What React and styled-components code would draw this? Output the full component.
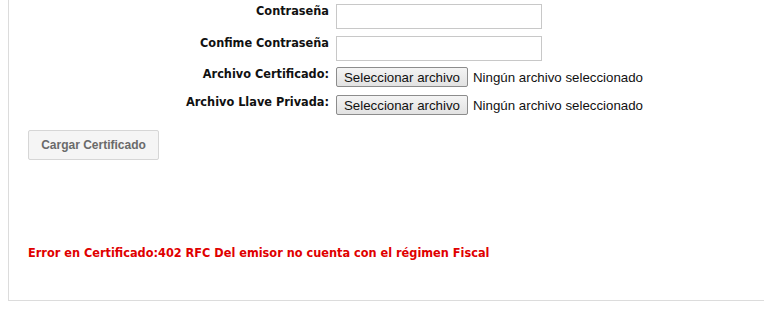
import React from 'react';
import styled, { createGlobalStyle } from 'styled-components';

const GlobalStyle = createGlobalStyle`
    html, body {
        margin: 0;
        padding: 0;
        background: #fff;
    }
`;

const Page = styled.div`
    padding-left: 8px;
    width: 756px;
`;

const Panel = styled.div`
    border-left: 1px solid #dcdcdc;
    border-bottom: 1px solid #dcdcdc;
    height: 301px;
    box-sizing: border-box;
`;

const Form = styled.div`
    display: grid;
    grid-template-columns: 320px 1fr;
    column-gap: 7px;
    padding-top: 4px;
`;

const Label = styled.div`
    text-align: right;
    font-family: "DejaVu Sans Condensed", "DejaVu Sans", Tahoma, sans-serif;
    font-weight: bold;
    font-size: 12.6px;
    line-height: 13px;
    color: #111;
    margin-bottom: ${p => p.$gap || 0}px;
`;

const Field = styled.div`
    display: flex;
    align-items: center;
    margin-bottom: ${p => p.$gap || 0}px;
`;

const TextInput = styled.input`
    width: 206px;
    height: 25px;
    box-sizing: border-box;
    border: 1px solid #c8c8c8;
    padding: 2px 4px;
    font-size: 13px;
    outline: none;
`;

const FileButton = styled.button`
    height: 20px;
    width: 132px;
    box-sizing: border-box;
    padding: 0;
    border: 1px solid #8c8c8c;
    border-radius: 2px;
    background: linear-gradient(#f4f4f4, #e2e2e2);
    font-family: "Liberation Sans", Arial, sans-serif;
    font-size: 13.3px;
    color: #111;
`;

const FileName = styled.span`
    margin-left: 5px;
    font-family: "Liberation Sans", Arial, sans-serif;
    font-size: 13.3px;
    color: #111;
`;

const Actions = styled.div`
    padding: 15px 0 0 19px;
`;

const SubmitButton = styled.button`
    width: 131px;
    height: 30px;
    box-sizing: border-box;
    border: 1px solid #d6d6d6;
    border-radius: 2px;
    background: #f5f5f5;
    font-family: "Liberation Sans", Arial, sans-serif;
    font-weight: bold;
    font-size: 12px;
    color: #6a6a6a;
`;

const ErrorText = styled.div`
    margin: 85px 0 0 19px;
    font-family: "DejaVu Sans Condensed", "DejaVu Sans", Tahoma, sans-serif;
    font-weight: bold;
    font-size: 12.6px;
    color: #e00000;
`;

const rows = [
    { label: 'Contraseña', type: 'text', gap: 7 },
    { label: 'Confime Contraseña', type: 'text', gap: 6 },
    { label: 'Archivo Certificado:', type: 'file', gap: 8 },
    { label: 'Archivo Llave Privada:', type: 'file', gap: 0 },
];

export default function App() {
    return (
        <Page>
            <GlobalStyle />
            <Panel>
                <Form>
                    {rows.map(row => (
                        <React.Fragment key={row.label}>
                            <Label $gap={row.gap}>{row.label}</Label>
                            <Field $gap={row.gap}>
                                {row.type === 'text' ? (
                                    <TextInput type="password" />
                                ) : (
                                    <>
                                        <FileButton type="button">Seleccionar archivo</FileButton>
                                        <FileName>Ningún archivo seleccionado</FileName>
                                    </>
                                )}
                            </Field>
                        </React.Fragment>
                    ))}
                </Form>
                <Actions>
                    <SubmitButton type="button">Cargar Certificado</SubmitButton>
                </Actions>
                <ErrorText>Error en Certificado:402 RFC Del emisor no cuenta con el régimen Fiscal</ErrorText>
            </Panel>
        </Page>
    );
}
